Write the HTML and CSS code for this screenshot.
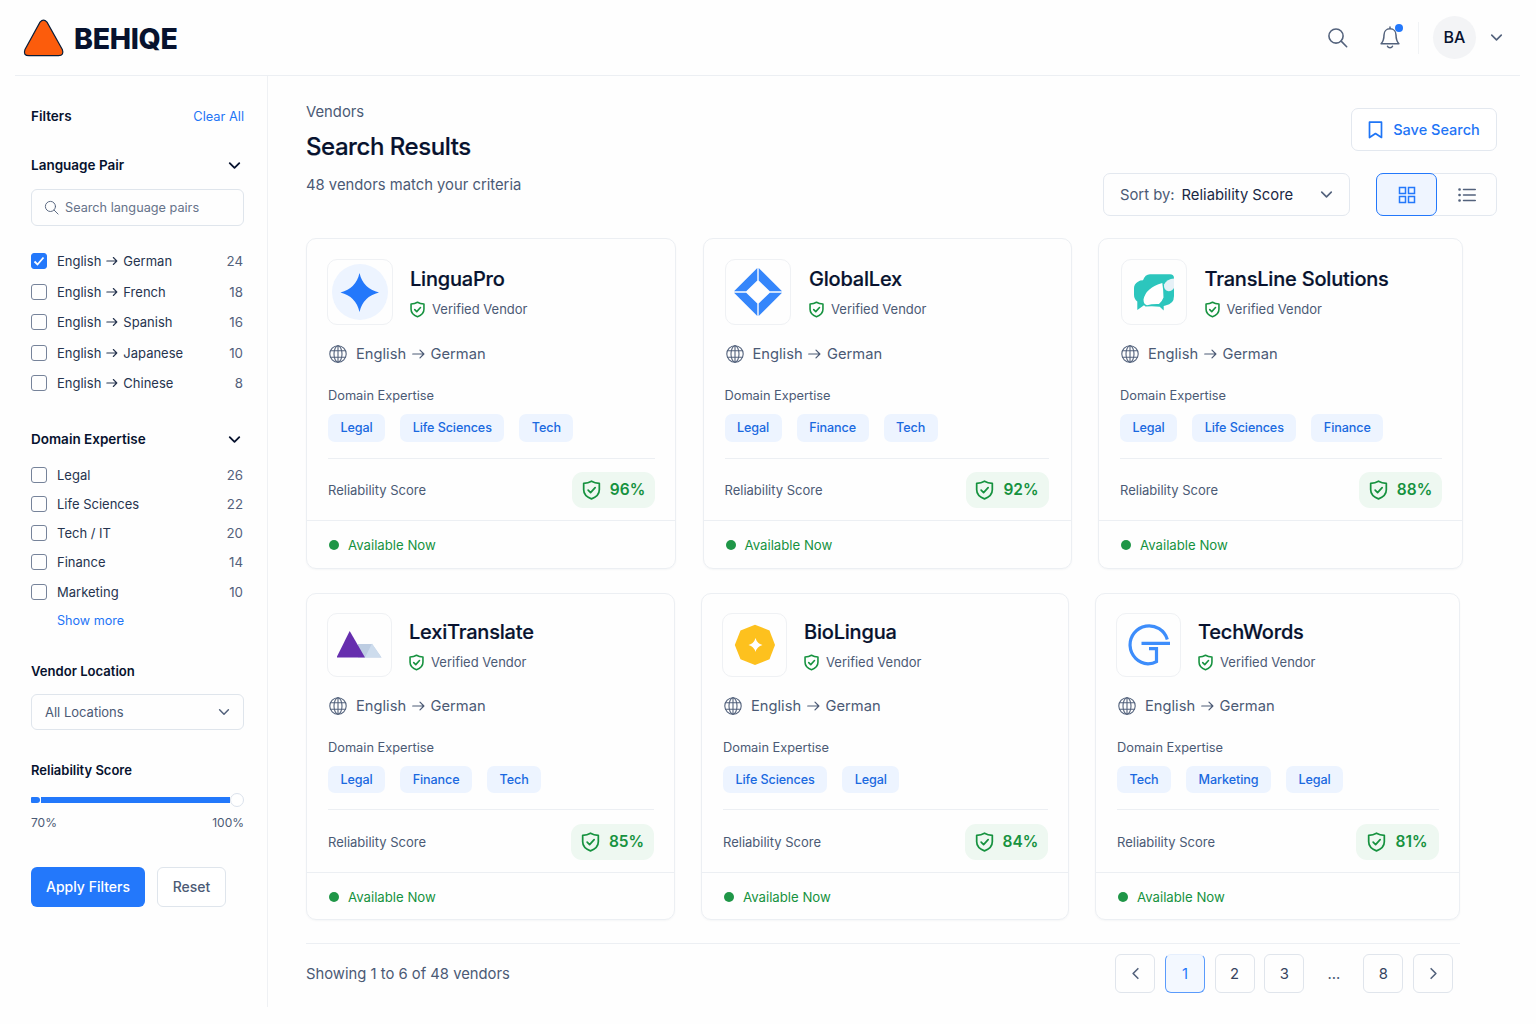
FILE: index.html
```html
<!DOCTYPE html>
<html lang="en">
<head>
    <meta charset="utf-8">
    <title>Behiqe - Vendors</title>
    <link rel="stylesheet" href="styles.css">
</head>
<body>
    <svg class="sprite" width="0" height="0">
        <symbol id="search" viewBox="0 0 24 24"><circle cx="10.3" cy="10.3" r="8.1"/><path d="M16.2 16.2 22.5 22.5"/></symbol>
        <symbol id="chevron" viewBox="0 0 12 12"><path d="M1.600 3.800 6 8.200l4.400-4.400"/></symbol>
        <symbol id="shield" viewBox="0 0 20 22"><path d="M10 1.300c2.500 1.500 5.300 2.200 8.600 2.300v7.200c0 4.800-3.500 8.100-8.600 9.900-5.100-1.800-8.600-5.100-8.600-9.900V3.600c3.300-.1 6.100-.8 8.600-2.300z"/><path d="m6.300 11.200 2.700 2.600 5-5.500"/></symbol>
        <symbol id="globe" viewBox="0 0 18 18"><circle cx="9" cy="9" r="8.200"/><ellipse cx="9" cy="9" rx="4" ry="8.200"/><path d="M9 .8v16.400M1.600 5.800h14.800M1.600 12.200h14.800"/></symbol>
        <symbol id="arrow" viewBox="0 0 14 12"><path d="M.8 6h12M8.600 1.800 12.800 6l-4.200 4.200"/></symbol>
    </svg>

    <header class="topbar">
        <div class="brand">
            <svg width="42" height="38" viewBox="0 0 42 38"><path d="M17 3.200Q20.500-.8 24 3.200L39.300 30.500Q41.500 36.500 35.500 36.700H6Q-.3 36.500 2 30.500Z" fill="#fc5c0c" stroke="#0a1d38" stroke-width="1.200"/></svg>
            <span class="brand-name">BEHIQE</span>
        </div>
        <div class="topbar-right">
            <svg class="icon" width="21" height="21"><use href="#search"/></svg>
            <div class="bell">
                <svg class="icon" width="20" height="23" viewBox="0 0 20 23"><path d="M10 2.800c-3.800 0-6 2.900-6 6.200 0 5-1.300 7-2.900 8.800h17.800C17.300 16 16 14 16 9c0-3.300-2.200-6.200-6-6.200zM10 2.800V.9M7.500 20.200c.8 2 4.200 2 5 0"/></svg>
                <span class="bell-dot"></span>
            </div>
            <div class="avatar">BA</div>
            <svg class="icon account-caret" width="13" height="13"><use href="#chevron"/></svg>
        </div>
    </header>

    <div class="layout">
        <aside class="sidebar">
            <div class="side-row filters-head">
                <h2>Filters</h2>
                <a class="link">Clear All</a>
            </div>

            <div class="side-row lang-head">
                <h3>Language Pair</h3>
                <svg class="icon dark" width="13" height="13"><use href="#chevron"/></svg>
            </div>
            <div class="search-box">
                <svg class="icon" width="15" height="15"><use href="#search"/></svg>
                <span>Search language pairs</span>
            </div>
            <ul class="options lang-options">
                <li><span class="check checked"><svg width="12" height="12" viewBox="0 0 12 12"><path d="m1.500 6.500 3 3 6-7"/></svg></span>English <svg class="arrow" width="12" height="10"><use href="#arrow"/></svg> German<b>24</b></li>
                <li><span class="check"></span>English <svg class="arrow" width="12" height="10"><use href="#arrow"/></svg> French<b>18</b></li>
                <li><span class="check"></span>English <svg class="arrow" width="12" height="10"><use href="#arrow"/></svg> Spanish<b>16</b></li>
                <li><span class="check"></span>English <svg class="arrow" width="12" height="10"><use href="#arrow"/></svg> Japanese<b>10</b></li>
                <li><span class="check"></span>English <svg class="arrow" width="12" height="10"><use href="#arrow"/></svg> Chinese<b>8</b></li>
            </ul>

            <div class="side-row domain-head">
                <h3>Domain Expertise</h3>
                <svg class="icon dark" width="13" height="13"><use href="#chevron"/></svg>
            </div>
            <ul class="options domain-options">
                <li><span class="check"></span>Legal<b>26</b></li>
                <li><span class="check"></span>Life Sciences<b>22</b></li>
                <li><span class="check"></span>Tech / IT<b>20</b></li>
                <li><span class="check"></span>Finance<b>14</b></li>
                <li><span class="check"></span>Marketing<b>10</b></li>
            </ul>
            <a class="link show-more">Show more</a>

            <h3 class="location-title">Vendor Location</h3>
            <div class="select">
                <span>All Locations</span>
                <svg class="icon" width="12" height="12"><use href="#chevron"/></svg>
            </div>

            <h3 class="score-title">Reliability Score</h3>
            <div class="slider">
                <span class="slider-start"></span>
                <span class="slider-track"></span>
                <span class="slider-thumb"></span>
            </div>
            <div class="side-row slider-labels"><span>70%</span><span>100%</span></div>

            <div class="side-buttons">
                <button class="btn-apply">Apply Filters</button>
                <button class="btn-reset">Reset</button>
            </div>
        </aside>

        <main class="main">
            <div class="page-head">
                <div>
                    <div class="crumb">Vendors</div>
                    <h1>Search Results</h1>
                    <p class="match">48 vendors match your criteria</p>
                </div>
                <div class="tools">
                    <button class="save">
                        <svg class="icon" width="15" height="18" viewBox="0 0 15 18"><path d="M1.500 1.200h12v15.300l-6-4-6 4z"/></svg>
                        <span>Save Search</span>
                    </button>
                    <div class="tools-row">
                        <div class="sort">
                            <span class="sort-label">Sort by:</span>
                            <span class="sort-value">Reliability Score</span>
                            <svg class="icon" width="13" height="13"><use href="#chevron"/></svg>
                        </div>
                        <div class="views">
                            <div class="view active"><svg class="icon" width="18" height="18" viewBox="0 0 18 18"><path d="M1.500 1.500h6v6h-6zM10.500 1.500h6v6h-6zM1.500 10.500h6v6h-6zM10.500 10.500h6v6h-6z"/></svg></div>
                            <div class="view"><svg class="icon" width="18" height="16" viewBox="0 0 18 16"><path d="M5.500 2.500h11.800M5.500 8h11.800M5.500 13.500h11.800"/><path class="bullets" d="M1.500 2.500h.1M1.500 8h.1M1.500 13.500h.1"/></svg></div>
                        </div>
                    </div>
                </div>
            </div>

            <section class="cards first">
                <article class="card">
                    <div class="card-body">
                        <div class="card-head">
                            <div class="logo"><svg width="58" height="58" viewBox="0 0 58 58"><circle cx="29" cy="29" r="28" fill="#edf4ff"/><path d="M28.500 10q3.500 15.500 19.500 19.500-16 4-19.500 19.500-3.500-15.500-19-19.500 15.500-4 19-19.500z" fill="#2378fb"/></svg></div>
                            <div class="who">
                                <h4>LinguaPro</h4>
                                <div class="verified"><svg class="icon green" width="15" height="17"><use href="#shield"/></svg>Verified Vendor</div>
                            </div>
                        </div>
                        <div class="pair"><svg class="icon globe" width="18" height="18"><use href="#globe"/></svg>English <svg class="arrow" width="13" height="12"><use href="#arrow"/></svg> German</div>
                        <div class="label">Domain Expertise</div>
                        <div class="tags"><span>Legal</span><span>Life Sciences</span><span>Tech</span></div>
                        <div class="score-row">Reliability Score<div class="score"><svg class="icon green" width="19" height="20"><use href="#shield"/></svg>96%</div></div>
                    </div>
                    <div class="card-foot"><i></i>Available Now</div>
                </article>

                <article class="card">
                    <div class="card-body">
                        <div class="card-head">
                            <div class="logo"><svg width="50" height="50" viewBox="0 0 50 50"><path d="M24.300 1v12.500L13.200 24.300H1zM25.700 1v12.500l11.100 10.800H49zM24.300 49V36.500L13.200 25.700H1zM25.700 49V36.500l11.100-10.800H49z" fill="#3586fb"/></svg></div>
                            <div class="who">
                                <h4>GlobalLex</h4>
                                <div class="verified"><svg class="icon green" width="15" height="17"><use href="#shield"/></svg>Verified Vendor</div>
                            </div>
                        </div>
                        <div class="pair"><svg class="icon globe" width="18" height="18"><use href="#globe"/></svg>English <svg class="arrow" width="13" height="12"><use href="#arrow"/></svg> German</div>
                        <div class="label">Domain Expertise</div>
                        <div class="tags"><span>Legal</span><span>Finance</span><span>Tech</span></div>
                        <div class="score-row">Reliability Score<div class="score"><svg class="icon green" width="19" height="20"><use href="#shield"/></svg>92%</div></div>
                    </div>
                    <div class="card-foot"><i></i>Available Now</div>
                </article>

                <article class="card">
                    <div class="card-body">
                        <div class="card-head">
                            <div class="logo"><svg width="40" height="37" viewBox="0 0 40 37"><path d="M4 7.700q2-1.400 5-1.400Q11 .3 16 .3h20q4 0 4 4V22q0 8-8.500 9.500l-1.800.5v4.500l-4-3.700q-6-1-14.200-.3l-1.500-1.200L3.300 36v-8.500Q0 25 0 20.700V14q0-4 4-6.300z" fill="#2cc6bd"/><path d="M28.300 9Q12 13.500 9.500 25.500q0 5 3.500 5.700 5-1.500 12-1.200 3-2.500 4.500-6.500 0-7-1.200-14.500z" fill="#fff"/><path d="M40 4.500Q33 5 30 10.500q-.5 6 4.500 6.800 4-.3 5.500-3.300z" fill="#e6f1f7"/></svg></div>
                            <div class="who">
                                <h4>TransLine Solutions</h4>
                                <div class="verified"><svg class="icon green" width="15" height="17"><use href="#shield"/></svg>Verified Vendor</div>
                            </div>
                        </div>
                        <div class="pair"><svg class="icon globe" width="18" height="18"><use href="#globe"/></svg>English <svg class="arrow" width="13" height="12"><use href="#arrow"/></svg> German</div>
                        <div class="label">Domain Expertise</div>
                        <div class="tags"><span>Legal</span><span>Life Sciences</span><span>Finance</span></div>
                        <div class="score-row">Reliability Score<div class="score"><svg class="icon green" width="19" height="20"><use href="#shield"/></svg>88%</div></div>
                    </div>
                    <div class="card-foot"><i></i>Available Now</div>
                </article>
            </section>

            <section class="cards second">
                <article class="card">
                    <div class="card-body">
                        <div class="card-head">
                            <div class="logo"><svg width="46" height="34" viewBox="0 0 46 34"><path d="M21 16h14l9.500 13.500H21z" fill="#bdcde2"/><path d="M35 15.500 44.500 29.500H28z" fill="#cddced"/><path d="M12.700 3 28 29.500H-.5z" fill="#662eae"/></svg></div>
                            <div class="who">
                                <h4>LexiTranslate</h4>
                                <div class="verified"><svg class="icon green" width="15" height="17"><use href="#shield"/></svg>Verified Vendor</div>
                            </div>
                        </div>
                        <div class="pair"><svg class="icon globe" width="18" height="18"><use href="#globe"/></svg>English <svg class="arrow" width="13" height="12"><use href="#arrow"/></svg> German</div>
                        <div class="label">Domain Expertise</div>
                        <div class="tags"><span>Legal</span><span>Finance</span><span>Tech</span></div>
                        <div class="score-row">Reliability Score<div class="score"><svg class="icon green" width="19" height="20"><use href="#shield"/></svg>85%</div></div>
                    </div>
                    <div class="card-foot"><i></i>Available Now</div>
                </article>

                <article class="card">
                    <div class="card-body">
                        <div class="card-head">
                            <div class="logo"><svg width="42" height="42" viewBox="0 0 42 42"><path d="m21 .8 14.500 5.700L41 21l-5.500 14.300L21 41 6.500 35.300.8 21 6.500 6.500z" fill="#fdc11e"/><path d="M21.500 14q1.500 5.500 7 7-5.500 1.500-7 7-1.500-5.500-7-7 5.500-1.500 7-7z" fill="#fff"/></svg></div>
                            <div class="who">
                                <h4>BioLingua</h4>
                                <div class="verified"><svg class="icon green" width="15" height="17"><use href="#shield"/></svg>Verified Vendor</div>
                            </div>
                        </div>
                        <div class="pair"><svg class="icon globe" width="18" height="18"><use href="#globe"/></svg>English <svg class="arrow" width="13" height="12"><use href="#arrow"/></svg> German</div>
                        <div class="label">Domain Expertise</div>
                        <div class="tags"><span>Life Sciences</span><span>Legal</span></div>
                        <div class="score-row">Reliability Score<div class="score"><svg class="icon green" width="19" height="20"><use href="#shield"/></svg>84%</div></div>
                    </div>
                    <div class="card-foot"><i></i>Available Now</div>
                </article>

                <article class="card">
                    <div class="card-body">
                        <div class="card-head">
                            <div class="logo"><svg width="42" height="42" viewBox="0 0 42 42" fill="none" stroke="#3d8dfb" stroke-width="3.200"><path d="M39.300 15.500A19 19 0 1 0 20 39.800q5 0 8.500-2.200V24.700H21M13.500 19.300H42"/></svg></div>
                            <div class="who">
                                <h4>TechWords</h4>
                                <div class="verified"><svg class="icon green" width="15" height="17"><use href="#shield"/></svg>Verified Vendor</div>
                            </div>
                        </div>
                        <div class="pair"><svg class="icon globe" width="18" height="18"><use href="#globe"/></svg>English <svg class="arrow" width="13" height="12"><use href="#arrow"/></svg> German</div>
                        <div class="label">Domain Expertise</div>
                        <div class="tags"><span>Tech</span><span>Marketing</span><span>Legal</span></div>
                        <div class="score-row">Reliability Score<div class="score"><svg class="icon green" width="19" height="20"><use href="#shield"/></svg>81%</div></div>
                    </div>
                    <div class="card-foot"><i></i>Available Now</div>
                </article>
            </section>

            <footer class="pagination">
                <span>Showing 1 to 6 of 48 vendors</span>
                <nav class="pages">
                    <a><svg class="icon prev" width="13" height="13"><use href="#chevron"/></svg></a>
                    <a class="current">1</a>
                    <a>2</a>
                    <a>3</a>
                    <span class="dots">...</span>
                    <a>8</a>
                    <a><svg class="icon next" width="13" height="13"><use href="#chevron"/></svg></a>
                </nav>
            </footer>
        </main>
    </div>
</body>
</html>
```

FILE: styles.css
```css
* {
    box-sizing: border-box;
}
body {
    margin: 0;
    height: 1024px;
    overflow: hidden;
    background: #fefefe;
    color: #4b5a75;
    font-family: Inter, "Liberation Sans", sans-serif;
    font-size: 13px;
}
h1, h2, h3, h4, p, ul {
    margin: 0;
    padding: 0;
}
h1, h2, h3, h4 {
    color: #07122e;
    font-weight: 600;
}
button {
    font-family: inherit;
    padding: 0;
}
svg {
    flex: none;
}
.sprite {
    position: absolute;
}
.icon {
    fill: none;
    stroke: #53627c;
    stroke-width: 1.5;
    stroke-linecap: round;
    stroke-linejoin: round;
}
.icon.dark {
    stroke: #07122e;
    stroke-width: 1.7;
}
.icon.green {
    stroke: #16923f;
    stroke-width: 2.1;
}
.arrow {
    fill: none;
    stroke: currentColor;
    stroke-width: 1.3;
    stroke-linecap: round;
    stroke-linejoin: round;
}
.link {
    color: #1f75f6;
}

/* top bar */
.topbar {
    display: flex;
    justify-content: space-between;
    align-items: center;
    height: 76px;
    margin: 0 16px 0 15px;
    padding-left: 8px;
    border-bottom: 1px solid #eceff3;
}
.brand {
    display: flex;
    align-items: center;
    gap: 9px;
}
.brand-name {
    padding-top: 2px;
    color: #07122e;
    font-size: 28.5px;
    font-weight: 800;
    letter-spacing: -0.3px;
}
.topbar-right {
    display: flex;
    align-items: center;
    padding-right: 17px;
}
.topbar-right > .icon:first-child {
    stroke-width: 1.8;
}
.bell {
    position: relative;
    display: flex;
    height: 32px;
    align-items: center;
    margin-left: 32px;
    padding-right: 18px;
    border-right: 1px solid #f1f3f5;
}
.bell-dot {
    position: absolute;
    left: 15px;
    top: 2px;
    width: 8px;
    height: 8px;
    border-radius: 50%;
    background: #2378fb;
}
.avatar {
    width: 43px;
    height: 43px;
    margin-left: 14px;
    border-radius: 50%;
    background: #f3f4f6;
    color: #07122e;
    font-size: 16px;
    font-weight: 500;
    line-height: 43px;
    text-align: center;
}
.account-caret {
    margin-left: 14px;
}

.layout {
    display: flex;
}

/* filters */
.sidebar {
    width: 268px;
    height: 931px;
    padding: 30px 23px 0 31px;
    border-right: 1px solid #eff1f4;
}
.sidebar h2,
.sidebar h3 {
    font-size: 13.5px;
    line-height: 20px;
}
.side-row {
    display: flex;
    justify-content: space-between;
    align-items: center;
    height: 20px;
}
.side-row .dark {
    margin-right: 3px;
}
.lang-head {
    margin-top: 29px;
}
.search-box,
.select {
    display: flex;
    align-items: center;
    height: 37px;
    border: 1px solid #dfe5ec;
    border-radius: 6px;
}
.search-box {
    gap: 6px;
    margin-top: 14px;
    padding-left: 12px;
    color: #66738a;
    font-size: 12.7px;
}
.options {
    list-style: none;
    color: #26344f;
}
.options li {
    display: flex;
    align-items: center;
}
.options .arrow {
    margin: 0 5px;
}
.options b {
    margin-left: auto;
    padding-right: 1px;
    color: #53617b;
    font-size: 13.3px;
    font-weight: 400;
}
.lang-options {
    margin-top: 20px;
}
.lang-options li {
    height: 30.5px;
}
.check {
    display: flex;
    align-items: center;
    justify-content: center;
    width: 16px;
    height: 16px;
    margin-right: 10px;
    border: 1.5px solid #76839a;
    border-radius: 3px;
}
.check.checked {
    border-color: #2378fb;
    background: #2378fb;
}
.check path {
    fill: none;
    stroke: #fff;
    stroke-width: 1.8;
}
.domain-head {
    margin-top: 30.5px;
}
.domain-options {
    margin-top: 11px;
}
.domain-options li {
    height: 29.25px;
}
.show-more {
    display: block;
    margin-left: 26px;
    font-size: 12.6px;
    line-height: 30px;
}
.filters-head .link {
    font-size: 12.8px;
}
.sidebar .location-title {
    margin-top: 25px;
    font-size: 13.1px;
}
.select {
    justify-content: space-between;
    height: 36px;
    margin-top: 13px;
    padding: 0 13px;
}
.sidebar .score-title {
    margin-top: 30px;
    font-size: 13px;
}
.slider {
    display: flex;
    align-items: center;
    height: 14px;
    margin-top: 13px;
}
.slider-start {
    width: 9px;
    height: 6px;
    margin-right: 1px;
    border-radius: 1px 3px 3px 1px;
    background: #2378fb;
}
.slider-track {
    flex: 1;
    height: 6px;
    background: #2378fb;
}
.slider-thumb {
    width: 14px;
    height: 14px;
    border: 1px solid #dbe2ec;
    border-radius: 50%;
    background: #fff;
}
.slider-labels {
    margin-top: 5px;
    font-size: 12px;
}
.side-buttons {
    display: flex;
    gap: 12px;
    margin-top: 34.5px;
}
.btn-apply,
.btn-reset {
    height: 40px;
    border-radius: 6px;
    font-size: 14px;
    font-weight: 500;
}
.btn-apply {
    width: 114px;
    border: none;
    background: #2378fb;
    color: #fff;
}
.btn-reset {
    width: 69px;
    border: 1px solid #dfe5ec;
    background: #fff;
    color: #4b5a75;
}

/* results */
.main {
    padding: 25px 0 0 38px;
}
.page-head {
    display: flex;
    justify-content: space-between;
    width: 1191px;
    height: 137px;
}
.crumb,
.match {
    font-size: 14.8px;
    line-height: 23px;
}
h1 {
    margin-top: 7px;
    font-size: 24px;
    font-weight: 500;
    letter-spacing: -0.45px;
    line-height: 31px;
    -webkit-text-stroke: 0.2px;
}
.match {
    margin-top: 12px;
}
.tools {
    display: flex;
    flex-direction: column;
    align-items: flex-end;
    padding-top: 7px;
}
.save {
    display: flex;
    align-items: center;
    justify-content: center;
    gap: 10px;
    width: 146px;
    height: 43px;
    border: 1px solid #e3e8ef;
    border-radius: 7px;
    background: #fff;
    color: #1f75f6;
    font-size: 14.5px;
    font-weight: 500;
}
.save .icon {
    stroke: #1f75f6;
    stroke-width: 1.7;
}
.tools-row {
    display: flex;
    gap: 26px;
    margin-top: 22px;
}
.sort {
    display: flex;
    align-items: center;
    width: 247px;
    height: 43px;
    padding: 0 16px;
    border: 1px solid #e3e8ef;
    border-radius: 7px;
    font-size: 14.8px;
}
.sort-value {
    margin-left: 7px;
    color: #1a2844;
}
.sort .icon {
    margin-left: auto;
}
.views {
    display: flex;
    width: 121px;
    height: 43px;
    border: 1px solid #e3e8ef;
    border-radius: 7px;
}
.view {
    display: flex;
    align-items: center;
    justify-content: center;
    width: 59px;
}
.view.active {
    width: 61px;
    margin: -1px 0 -1px -1px;
    border: 1px solid #2378fb;
    border-radius: 7px;
    background: #eff5ff;
}
.view.active .icon {
    stroke: #2378fb;
    stroke-linejoin: miter;
}
.bullets {
    stroke-width: 2.6;
}

.cards {
    display: grid;
}
.cards.first {
    grid-template-columns: 370px 369px 365px;
    column-gap: 26.5px;
}
.cards.second {
    grid-template-columns: 369px 368px 365px;
    column-gap: 26px;
    margin-top: 24px;
}
.card {
    border: 1px solid #eceff3;
    border-radius: 10px;
    box-shadow: 0 1px 2px rgba(20, 40, 80, 0.04);
}
.card-body {
    padding: 20px 20px 0 21px;
}
.card-head {
    display: flex;
    gap: 17px;
    margin-left: -1px;
}
.first .card:not(:first-child) .card-head {
    gap: 18px;
    margin-left: 0.5px;
}
.logo {
    display: flex;
    align-items: center;
    justify-content: center;
    width: 66px;
    height: 66px;
    border: 1px solid #eff1f4;
    border-radius: 10px;
}
.who h4 {
    margin-top: 7px;
    font-size: 20px;
    font-weight: 500;
    letter-spacing: -0.2px;
    line-height: 26px;
    -webkit-text-stroke: 0.2px;
}
.verified {
    display: flex;
    align-items: center;
    gap: 7px;
    height: 20px;
    margin-top: 7px;
    font-size: 13px;
}
.pair {
    display: flex;
    align-items: center;
    height: 20px;
    margin-top: 19px;
    padding-left: 1px;
    font-size: 14.7px;
}
.pair .arrow {
    margin: 0 6px 0 5.5px;
}
.globe {
    margin-right: 9px;
    stroke-width: 1.1;
}
.label {
    margin-top: 23px;
    font-size: 12.8px;
    line-height: 17px;
}
.tags {
    display: flex;
    gap: 15px;
    margin-top: 10px;
}
.tags span {
    height: 28px;
    padding: 0 12.5px;
    border-radius: 7px;
    background: #edf4ff;
    color: #1a69e0;
    font-size: 12.6px;
    font-weight: 500;
    letter-spacing: -0.1px;
    line-height: 28px;
}
.score-row {
    display: flex;
    justify-content: space-between;
    align-items: center;
    height: 62px;
    margin-top: 16px;
    border-top: 1px solid #eceff3;
}
.first .card:nth-child(2) .card-body {
    padding-right: 22px;
}
.score {
    display: flex;
    align-items: center;
    justify-content: center;
    gap: 9px;
    width: 83px;
    height: 36px;
    border-radius: 11px;
    background: #eef8f1;
    color: #16923f;
    font-size: 15.5px;
    font-weight: 600;
}
.score .icon {
    stroke-width: 1.9;
}
.card-foot {
    display: flex;
    align-items: center;
    gap: 9px;
    height: 48px;
    padding-left: 22px;
    border-top: 1px solid #eceff3;
    color: #16923f;
    font-size: 13.2px;
}
.card-foot i {
    width: 10px;
    height: 10px;
    border-radius: 50%;
    background: #1f9647;
}

/* second row is slightly tighter */
.second .card-body {
    padding-top: 19px;
}
.second .logo {
    width: 65px;
    height: 64px;
}
.second .card-head {
    height: 64px;
}
.second .who h4 {
    margin-top: 6px;
}
.second .tags span {
    height: 27px;
    line-height: 27px;
}
.second .score-row {
    height: 63px;
    padding-top: 1px;
}
.second .card-foot {
    height: 47px;
    padding-top: 1px;
}

.pagination {
    display: flex;
    justify-content: space-between;
    width: 1154px;
    margin-top: 23px;
    padding: 10px 7px 0 0;
    border-top: 1px solid #eceff3;
    font-size: 14.8px;
    line-height: 40px;
}
.pages {
    display: flex;
    gap: 9.6px;
}
.pages a,
.dots {
    display: flex;
    align-items: center;
    justify-content: center;
    width: 40px;
    height: 39px;
}
.pages a {
    border: 1px solid #e0e5ec;
    border-radius: 6px;
    color: #36445f;
}
.pages .current {
    border-color: #5a9bfc;
    border-top-color: #e6effd;
    background: #f3f8ff;
    color: #2378fb;
}
.prev {
    transform: rotate(90deg);
}
.next {
    transform: rotate(-90deg);
}
```
